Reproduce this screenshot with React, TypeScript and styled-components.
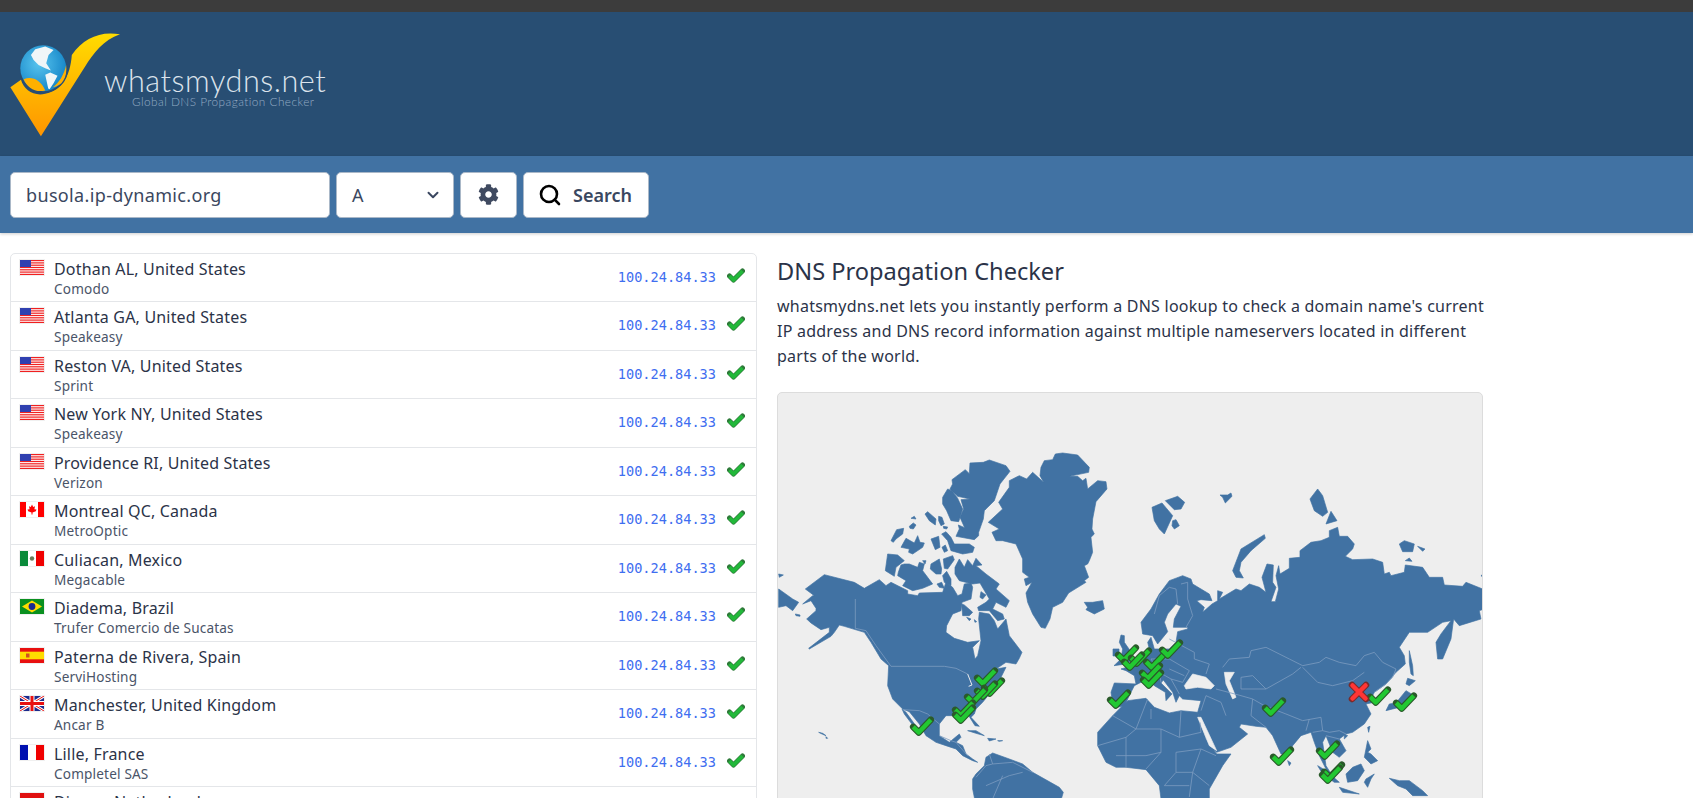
import React from 'react';
import styled, { createGlobalStyle } from 'styled-components';
import { Search, ChevronDown } from 'lucide-react';
import { FaCog } from 'react-icons/fa';

const Global = createGlobalStyle`
  html, body {
    margin: 0;
    height: 100%;
    overflow: hidden;
    background: #fff;
    font-family: "Noto Sans", "Open Sans", sans-serif;
    color: #2b3348;
  }
  * { box-sizing: border-box; }
`;

const TopStrip = styled.div`
  height: 12px;
  background: #3c3c3c;
`;

const Header = styled.header`
  height: 144px;
  background: #284e73;
  display: flex;
  align-items: flex-start;
  padding: 18px 0 0 10px;
`;

const LogoText = styled.div`
  margin: 35px 0 0 -18px;
`;

const LogoName = styled.div`
  font-family: Lato, sans-serif;
  font-weight: 300;
  font-size: 30.6px;
  line-height: 31px;
  letter-spacing: 0.55px;
  color: #dbe3ec;
`;

const LogoTag = styled.div`
  font-family: Lato, sans-serif;
  font-weight: 300;
  font-size: 11.8px;
  line-height: 11px;
  letter-spacing: 0.45px;
  margin: 0 0 0 28px;
  color: #94abc4;
`;

const SearchBar = styled.div`
  height: 77px;
  background: #4172a3;
  display: flex;
  gap: 6px;
  padding: 15.5px 10px 0;
  box-shadow: 0 1px 3px rgba(0, 0, 0, 0.2);
  position: relative;
`;

const Control = styled.div`
  height: 46px;
  background: #fff;
  border: 1px solid #aab8c8;
  border-radius: 5px;
  display: flex;
  align-items: center;
  font-size: 18px;
  letter-spacing: 0.35px;
  color: #3a4760;
`;

const DomainInput = styled(Control)`
  width: 320px;
  padding-left: 15px;
`;

const TypeSelect = styled(Control)`
  width: 118px;
  padding: 0 11px 0 15px;
  justify-content: space-between;
`;

const IconButton = styled(Control)`
  width: 57px;
  justify-content: center;
`;

const SearchButton = styled(Control)`
  width: 126px;
  padding-left: 14px;
  gap: 11px;
  font-weight: 600;
  letter-spacing: 0;
`;

const Main = styled.main`
  display: grid;
  grid-template-columns: 747px 706px;
  gap: 20px;
  padding: 19.5px 10px 0;
  align-items: start;
`;

const List = styled.div`
  border: 1px solid #e4e6e9;
  border-radius: 5px;
  height: 640px;
  overflow: hidden;
`;

const Row = styled.div`
  height: 48.5px;
  border-bottom: 1px solid #e4e6e9;
  display: flex;
  align-items: flex-start;
  padding: 0 11px 0 9px;
`;

const FlagBox = styled.svg`
  flex: none;
  width: 24px;
  height: 15px;
  margin: 6px 10px 0 0;
  box-shadow: 0 0 0 1px #f0f0f0;
`;

const Place = styled.div`
  flex: 1;
`;

const City = styled.div`
  font-size: 16px;
  line-height: 24px;
  letter-spacing: 0.18px;
  margin-top: 3px;
  color: #2b3348;
`;

const Provider = styled.div`
  font-size: 13.6px;
  line-height: 18px;
  letter-spacing: 0.17px;
  margin-top: -1px;
  color: #4a5468;
`;

const Ip = styled.div`
  font-family: "DejaVu Sans Mono", monospace;
  font-size: 13.6px;
  line-height: 46px;
  color: #3f6ef0;
  margin-right: 11px;
`;

const RowCheck = styled.svg`
  flex: none;
  width: 18px;
  height: 15px;
  margin-top: 14px;
`;

const Title = styled.h1`
  margin: 0;
  font-size: 23.6px;
  font-weight: 400;
  line-height: 36px;
  color: #2b3348;
`;

const Intro = styled.p`
  margin: 5px 0 0;
  font-size: 16px;
  line-height: 25.2px;
  letter-spacing: 0.24px;
  color: #2b3348;
  width: 715px;
`;

const MapCard = styled.div`
  margin-top: 23px;
  height: 500px;
  background: #eee;
  border: 1px solid #dcdcdc;
  border-radius: 5px;
  overflow: hidden;
`;

const MapSvg = styled.svg`
  display: block;
`;

const BG = '#eeeeee';
const LAND = '#4172a3';
const LINE = '#7c9cc0';

// north polar islands + greenland, traced from 775,440
const arctic = [
  '528,122 568,92 580,104 582,72 622,70 640,63 690,80 702,97 672,135 655,185 625,215 622,240 608,280 608,290 595,302 540,292 550,270 547,258 566,266 552,235 563,210 555,182 582,180 545,172 522,150 530,135',
  '500,175 515,150 528,155 545,178 560,210 548,248 525,245 512,215 500,195',
  '700,125 730,110 752,120 770,100 803,130 792,110 795,85 805,65 830,62 838,45 860,42 905,48 940,85 938,100 880,112 905,112 920,125 930,118 935,150 965,125 990,128 993,150 960,188 950,240 948,270 955,285 945,295 950,340 940,365 935,375 925,380 938,415 925,425 930,430 878,462 860,490 830,505 822,540 808,568 795,565 770,525 755,490 750,462 768,430 750,440 745,420 760,415 740,400 740,360 720,315 680,305 660,305 648,280 670,270 637,250 680,210 668,190 700,145',
  '405,238 415,232 420,240',
  '400,262 412,252 420,258 412,270 402,268',
  '447,225 455,218 480,240 478,258 460,245',
  '488,232 498,235 505,255 495,260 488,245',
  '502,262 515,264 512,270 503,268',
  '345,305 362,272 383,268 380,285 360,300 352,310',
  '375,325 390,298 415,312 425,290 432,310 445,312 440,325 410,345 398,340 400,330',
  '465,300 488,292 492,325 478,332',
  '498,325 508,318 515,335 505,340',
  '497,285 510,278 525,295 535,315 580,315 595,325 590,340 560,345 525,335 515,305',
  '335,345 365,348 385,365 360,385 355,412 328,395',
  '367,400 375,378 385,375 400,375 425,385 430,370 445,375 440,395 455,415 470,435 440,448 410,455 380,440 390,425 365,410',
  '440,365 450,365 447,375',
  '465,375 490,360 497,390 495,405 480,405 463,390',
  '502,360 530,350 535,362 515,390 505,388',
  '500,410 512,397 525,420 525,440 505,430',
  '483,435 497,430 505,448 490,445',
  '537,385 550,360 565,385 575,362 590,380 600,358 618,378 600,380 630,405 670,435 660,450 700,485 690,505 660,490 650,510 680,525 685,540 665,545 640,515 608,515 605,505 630,490 640,480 612,432 590,435 550,425 537,405',
  '615,458 630,468 620,480 612,475',
  '557,495 565,498 590,520 580,530 560,530',
  '572,535 585,540 580,545',
  '595,542 602,548 597,550',
  '925,490 950,490 980,485 985,510 955,525 930,512 935,505',
  '8,405 22,408 10,415',
  '8,450 50,480 68,490 50,515 30,500 8,505',
  '58,525 72,528 72,532 60,530',
];

// the americas, traced from 775,600
const americas = [
  '88,-30 145,-73 235,-50 265,-32 310,-58 330,-40 345,-50 395,-25 395,-15 425,-10 430,-18 500,-20 510,-50 530,-35 545,-10 558,-15 565,-45 585,-48 590,-35 585,0 558,10 555,35 530,45 512,80 510,100 535,118 575,130 610,125 590,145 597,180 605,170 615,125 608,60 610,40 640,45 655,65 665,90 690,60 700,110 738,160 730,178 720,195 690,190 660,210 690,205 680,225 670,245 640,285 620,310 600,330 595,345 585,355 610,382 597,380 575,345 545,350 510,350 490,375 490,410 520,430 550,405 555,415 540,430 560,440 570,465 590,480 605,490 590,485 560,470 540,450 510,440 480,430 450,410 430,375 400,338 380,330 350,300 335,260 338,200 315,180 285,130 265,100 205,82 190,78 175,100 165,112 100,150 98,148 160,100 160,85 135,92 105,72 92,60 120,35 120,28 105,5 80,15 110,-10 115,-10',
  '378,330 390,340 425,388 415,385 385,345',
  '575,395 600,395 625,410 600,403',
  '635,418 660,420 640,426',
  '665,425 680,425 670,427',
  '128,400 140,403 150,410 140,406',
  '150,413 155,418 150,418',
  '590,540 600,525 625,500 630,475 650,462 700,480 740,495 770,520 850,565 862,580 850,620 600,620 590,570',
];

// eurasia + africa, traced from 1125,480
const oldWorld = [
  '45,430 75,390 100,345 130,305 170,290 195,300 200,315 250,345 258,365 225,362 212,365 235,385 230,400 258,375 275,365 275,335 290,340 280,360 330,330 345,335 370,315 400,325 420,340 408,295 423,255 442,258 440,310 450,325 435,368 448,368 458,330 450,290 458,260 462,285 490,268 490,238 522,235 522,215 555,190 585,185 610,175 610,155 635,145 640,172 665,172 685,195 680,210 658,232 680,242 740,240 770,250 775,285 790,280 795,290 835,280 838,258 890,265 910,295 950,295 955,318 1010,322 1020,310 1070,330 1075,390 1060,395 1065,420 1000,440 983,420 975,480 950,540 935,540 930,490 945,465 975,425 950,430 905,460 850,460 820,505 835,530 838,555 810,580 780,615 745,640 735,660 745,670 720,675 735,705 715,735 680,760 660,765 640,780 660,815 640,835 620,820 600,770 590,790 600,860 625,900 615,900 580,830 565,790 555,760 525,770 500,800 490,825 465,825 440,770 420,745 390,742 345,735 340,745 365,765 315,805 272,820 250,800 222,730 215,700 225,665 170,660 160,650 150,670 140,640 112,603 105,612 138,645 120,665 118,640 85,620 70,605 45,610 25,620 5,660 -5,680 -25,685 -40,675 -45,640 -35,612 30,615 25,590 0,575 -15,570 20,560 35,550 60,530 70,510 65,490 75,475 85,510 130,510 150,490 155,458 185,450 185,445 142,445 145,420 165,382 150,375 125,405 115,430 125,458 95,495 80,470 50,465',
  '-85,760 -85,800 -60,850 -30,865 0,865 60,872 75,890 100,920 110,1000 250,1000 250,930 290,860 315,825 272,825 240,780 222,730 215,700 165,695 130,702 85,685 60,658 5,665 -20,690 -40,710',
  '-15,468 -5,470 -5,490 9,510 24,540 0,555 -36,560 -15,540 -10,510 -20,490',
  '-39,510 -21,510 -21,531 -39,531',
  '320,275 345,210 415,167 418,178 375,215 345,250 340,275 352,297 330,295',
  '78,85 108,72 140,110 115,165 100,150 85,125',
  '118,65 155,52 176,70 165,90 145,92',
  '140,125 150,122 160,140 145,150 138,140',
  '282,48 305,48 315,42 318,52 298,72 290,55',
  '552,60 575,30 590,50 605,100 590,112 565,95',
  '600,135 615,97 633,125',
  '820,195 835,185 865,195 860,218 830,218',
  '875,202 897,210 890,217',
  '838,245 850,237 858,247',
  '1065,290 1072,285 1072,295',
  // south east asia and japan
  '575,860 600,875 640,910 625,910 590,885',
  '660,885 680,865 705,855 715,875 695,905 665,910',
  '640,925 700,945 650,940',
  '720,900 745,885 735,900 725,925 715,910',
  '790,898 820,905 850,905 890,935 905,950 860,950 840,930 815,920',
  '725,785 735,810 725,820 735,825 755,845 735,855 715,835',
  '725,745 732,742 728,760',
  '485,845 495,852 490,860',
  '655,765 665,770 655,780',
  '780,695 790,675 810,672 840,635 865,650 868,658 840,680 800,690',
  '845,598 868,605 850,620 840,615',
  '850,515 860,560 862,590 855,585 850,550',
];

const seas = [
  '175,620 200,585 240,595 265,620 255,630 215,625 180,630',
  '295,580 325,580 310,605 330,655 320,660 300,615',
  '215,715 225,715 272,815 250,800',
];

// country lines, traced from 1125,640
const borders = [
  '530,80 580,70 600,55 640,70 690,80 715,50 745,40 770,70 810,90 800,115 780,135 745,160',
  '530,85 575,130 620,140 680,125 715,100',
  '290,85 310,60 370,55 375,35 420,25 490,60 530,80',
  '345,115 380,110 420,150 500,105 525,85',
  '415,200 480,225 530,245 585,235 590,275 560,280',
  '380,180 375,230 420,265',
  '345,115 345,150 420,150',
  '270,150 345,170 380,180 415,200',
  '240,170 285,190 300,230',
  '225,215 240,170',
  '590,275 610,280 640,275 660,285',
  '550,240 540,275',
  '600,290 640,300',
  '130,0 205,40 205,60 250,75 240,105',
  '75,60 130,60 190,95 170,130 135,120 100,100 75,60',
  '100,100 105,130',
  '130,90 175,110',
  '135,120 160,165',
  '-40,230 30,270 65,180',
  '30,270 105,270 160,295 165,215',
  '75,240 75,210',
  '105,270 105,340 60,390',
  '160,295 225,280 222,250',
  '150,340 225,330 270,350',
  '-85,320 0,295 30,270',
  '0,295 0,385',
  '-30,350 60,350 105,340',
  '150,340 150,400 115,440',
  '225,330 200,400 250,440',
  '150,400 200,400',
  '200,400 190,474',
  '115,440 190,440',
  '85,-75 100,-130 130,-155 150,-150 155,-105',
  '165,-165 185,-170 185,-120 200,-70 180,-35',
];

const americaBorders = [
  '238,0 238,88 270,95 300,140 345,202 505,202 540,208 575,225',
  '380,332 430,335 455,345 490,375',
  '490,410 525,425 540,430',
  '540,430 575,470',
  '640,465 650,495 630,500 600,535',
  '650,495 710,490 770,520',
  '630,560 700,530 740,520',
  '680,530 650,600',
];

const greens: [number, number][] = [
  [985, 678], [992, 688], [985, 691], [975, 697], [963, 710], [963, 715], [921, 727],
  [1126, 655], [1139, 658], [1132, 662], [1154, 662], [1170, 650], [1150, 673], [1151, 680], [1118, 700],
  [1273, 708], [1281, 757], [1327, 751], [1332, 772], [1330, 775], [1378, 697], [1404, 703],
];

function WorldMap(): React.ReactElement {
  return (
    <MapSvg width="705" height="500" viewBox="777 394 705 500">
      <g transform="translate(775 440) scale(0.3333)" fill={LAND} stroke={LAND} strokeWidth="2" strokeLinejoin="round">
        {arctic.map((p) => <polygon key={p} points={p} />)}
      </g>
      <g transform="translate(775 600) scale(0.3333)" fill={LAND} stroke={LAND} strokeWidth="2" strokeLinejoin="round">
        {americas.map((p) => <polygon key={p} points={p} />)}
        <polyline points="575,225 588,258 578,262" fill="none" stroke={BG} strokeWidth="3" />
        <g fill="none" stroke={LINE} strokeWidth="2.4">
          {americaBorders.map((p) => <polyline key={p} points={p} />)}
        </g>
      </g>
      <g transform="translate(1125 480) scale(0.3333)" fill={LAND} stroke={LAND} strokeWidth="2" strokeLinejoin="round">
        {oldWorld.map((p) => <polygon key={p} points={p} />)}
        {seas.map((p) => <polygon key={p} points={p} fill={BG} stroke={BG} />)}
      </g>
      <g transform="translate(1125 640) scale(0.3333)" fill="none" stroke={LINE} strokeWidth="2.4">
        {borders.map((p) => <polyline key={p} points={p} />)}
      </g>
      {greens.map(([x, y]) => (
        <g key={`${x}-${y}`} transform={`translate(${x - 11} ${y - 9}) scale(1.1)`} fill="none" strokeLinecap="round" strokeLinejoin="round">
          <polyline points="2,9 7,14 18,2.5" stroke="#2a5a2a" strokeWidth="6" />
          <polyline points="2,9 7,14 18,2.5" stroke="#22c832" strokeWidth="4" strokeLinecap="butt" />
        </g>
      ))}
      <g transform="translate(1348 683)" fill="none" strokeLinejoin="round">
        <path d="M3 3 L17 17 M17 3 L3 17" stroke="#7a2a2a" strokeWidth="6.5" strokeLinecap="round" />
        <path d="M3.5 3.5 L16.5 16.5 M16.5 3.5 L3.5 16.5" stroke="#ff3535" strokeWidth="4.5" strokeLinecap="round" />
      </g>
    </MapSvg>
  );
}

function Flag({ code }: { code: string }): React.ReactElement {
  if (code === 'us') {
    return (
      <FlagBox viewBox="0 0 24 15">
        <rect width="24" height="15" fill="#fff" />
        {[0, 2.3, 4.6, 6.9, 9.2, 11.5, 13.8].map((y) => <rect key={y} y={y} width="24" height="1.2" fill="#f02020" />)}
        <rect width="11" height="7" fill="#3040b0" />
      </FlagBox>
    );
  }
  if (code === 'ca') {
    return (
      <FlagBox viewBox="0 0 24 15">
        <rect width="24" height="15" fill="#fff" />
        <rect width="6" height="15" fill="#f00" />
        <rect x="18" width="6" height="15" fill="#f00" />
        <path d="M12 2.5 L13.2 5 L15 4.3 L14.4 7.3 L16.5 7.5 L15.8 9.3 L12.5 10.5 L12.5 12.5 L11.5 12.5 L11.5 10.5 L8.2 9.3 L7.5 7.5 L9.6 7.3 L9 4.3 L10.8 5 Z" fill="#f00" />
      </FlagBox>
    );
  }
  if (code === 'mx') {
    return (
      <FlagBox viewBox="0 0 24 15">
        <rect width="24" height="15" fill="#fff" />
        <rect width="8" height="15" fill="#0a8a3a" />
        <rect x="16" width="8" height="15" fill="#f00000" />
        <circle cx="12" cy="7.5" r="2.2" fill="#6a7a5a" />
      </FlagBox>
    );
  }
  if (code === 'br') {
    return (
      <FlagBox viewBox="0 0 24 15">
        <rect width="24" height="15" fill="#0a9020" />
        <polygon points="12,1.5 22,7.5 12,13.5 2,7.5" fill="#ffdc00" />
        <circle cx="12" cy="7.5" r="3.4" fill="#1a2a90" />
      </FlagBox>
    );
  }
  if (code === 'es') {
    return (
      <FlagBox viewBox="0 0 24 15">
        <rect width="24" height="15" fill="#e81010" />
        <rect y="3.7" width="24" height="7.6" fill="#ffdc00" />
        <rect x="6" y="5.5" width="3.5" height="4" fill="#d05020" />
      </FlagBox>
    );
  }
  if (code === 'gb') {
    return (
      <FlagBox viewBox="0 0 24 15">
        <rect width="24" height="15" fill="#1c2a8c" />
        <path d="M0 0 L24 15 M24 0 L0 15" stroke="#fff" strokeWidth="3" />
        <path d="M0 0 L24 15 M24 0 L0 15" stroke="#e81010" strokeWidth="1" />
        <path d="M12 0 V15 M0 7.5 H24" stroke="#fff" strokeWidth="5" />
        <path d="M12 0 V15 M0 7.5 H24" stroke="#e81010" strokeWidth="3" />
      </FlagBox>
    );
  }
  if (code === 'fr') {
    return (
      <FlagBox viewBox="0 0 24 15">
        <rect width="24" height="15" fill="#fff" />
        <rect width="8" height="15" fill="#0010b0" />
        <rect x="16" width="8" height="15" fill="#f00000" />
      </FlagBox>
    );
  }
  return (
    <FlagBox viewBox="0 0 24 15">
      <rect width="24" height="15" fill="#fff" />
      <rect width="24" height="5" fill="#e01010" />
      <rect y="10" width="24" height="5" fill="#1030a0" />
    </FlagBox>
  );
}

const servers = [
  { code: 'us', city: 'Dothan AL, United States', provider: 'Comodo' },
  { code: 'us', city: 'Atlanta GA, United States', provider: 'Speakeasy' },
  { code: 'us', city: 'Reston VA, United States', provider: 'Sprint' },
  { code: 'us', city: 'New York NY, United States', provider: 'Speakeasy' },
  { code: 'us', city: 'Providence RI, United States', provider: 'Verizon' },
  { code: 'ca', city: 'Montreal QC, Canada', provider: 'MetroOptic' },
  { code: 'mx', city: 'Culiacan, Mexico', provider: 'Megacable' },
  { code: 'br', city: 'Diadema, Brazil', provider: 'Trufer Comercio de Sucatas' },
  { code: 'es', city: 'Paterna de Rivera, Spain', provider: 'ServiHosting' },
  { code: 'gb', city: 'Manchester, United Kingdom', provider: 'Ancar B' },
  { code: 'fr', city: 'Lille, France', provider: 'Completel SAS' },
  { code: 'nl', city: 'Dieren, Netherlands', provider: '' },
];

export default function App(): React.ReactElement {
  return (
    <>
      <Global />
      <TopStrip />
      <Header>
        <svg width="112" height="108" viewBox="30 90 335 325">
          <defs>
            <linearGradient id="tick" x1="0" y1="0" x2="0" y2="1">
              <stop offset="0" stopColor="#ffdc00" />
              <stop offset="1" stopColor="#ff9500" />
            </linearGradient>
            <radialGradient id="globe" cx="0.4" cy="0.4" r="0.7">
              <stop offset="0" stopColor="#58c4ee" />
              <stop offset="1" stopColor="#0e7fc4" />
            </radialGradient>
          </defs>
          <path d="M30 262 L62 240 C 70 270 100 290 135 282 C 185 270 210 230 215 165 C 250 115 300 92 360 103 C 310 120 280 160 255 200 L 122 410 Z" fill="url(#tick)" />
          <circle cx="130" cy="205" r="74" fill="#284e73" />
          <circle cx="129" cy="205" r="69" fill="url(#globe)" />
          <path d="M92 165 L105 148 135 140 160 150 145 165 138 190 152 212 135 205 115 195 100 180 Z M135 225 L150 218 172 228 160 250 148 268 144 266 Z" fill="#f0f6f8" />
          <path d="M70 238 C 95 228 122 240 135 272 C 105 280 80 262 70 238 Z M158 262 C 175 250 192 225 198 195 C 202 235 185 258 158 262 Z" fill="#ffb000" />
        </svg>
        <LogoText>
          <LogoName>whatsmydns.net</LogoName>
          <LogoTag>Global DNS Propagation Checker</LogoTag>
        </LogoText>
      </Header>
      <SearchBar>
        <DomainInput>busola.ip-dynamic.org</DomainInput>
        <TypeSelect>
          A
          <ChevronDown size={18} strokeWidth={2.6} color="#3a4760" />
        </TypeSelect>
        <IconButton><FaCog size={21} color="#3f4a60" /></IconButton>
        <SearchButton>
          <Search size={24} strokeWidth={2.6} color="#000" />
          Search
        </SearchButton>
      </SearchBar>
      <Main>
        <List>
          {servers.map((s) => (
            <Row key={s.city}>
              <Flag code={s.code} />
              <Place>
                <City>{s.city}</City>
                <Provider>{s.provider}</Provider>
              </Place>
              <Ip>100.24.84.33</Ip>
              <RowCheck viewBox="0 0 18 15" fill="none">
                <polyline points="2.5,8 6.5,12 15.5,3" stroke="#2f7a3a" strokeWidth="5" strokeLinejoin="round" strokeLinecap="round" />
                <polyline points="2.5,8 6.5,12 15.5,3" stroke="#22b83a" strokeWidth="3.8" strokeLinejoin="round" />
              </RowCheck>
            </Row>
          ))}
        </List>
        <div>
          <Title>DNS Propagation Checker</Title>
          <Intro>
            whatsmydns.net lets you instantly perform a DNS lookup to check a domain name's current IP address and DNS record information against multiple nameservers located in different parts of the world.
          </Intro>
          <MapCard>
            <WorldMap />
          </MapCard>
        </div>
      </Main>
    </>
  );
}
